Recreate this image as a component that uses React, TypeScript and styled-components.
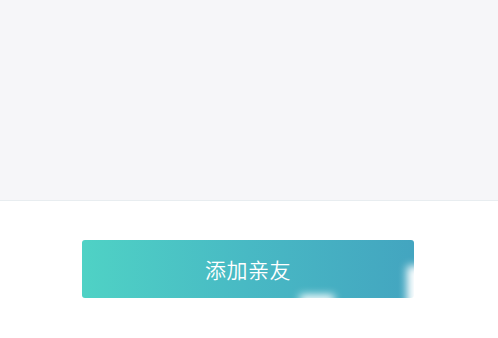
import React from 'react'
import styled, { createGlobalStyle } from 'styled-components'

const GlobalStyle = createGlobalStyle`
	html, body {
		margin: 0;
		padding: 0;
		background: #ffffff;
	}
	body {
		font-family: "Noto Sans CJK SC", "Noto Sans", sans-serif;
	}
`

const Page = styled.div`
	width: 498px;
	height: 338px;
	display: flex;
	flex-direction: column;
	background: #ffffff;
	overflow: hidden;
`

const ContentArea = styled.div`
	height: 200px;
	background: #f6f6f9;
	border-bottom: 1px solid #e8edf0;
	flex: none;
`

const Footer = styled.div`
	display: flex;
	justify-content: center;
	padding: 39px 2px 0 0;
`

const AddButton = styled.button`
	position: relative;
	width: 332px;
	height: 58px;
	border: none;
	border-radius: 3px;
	background: linear-gradient(90deg, #4fd2c5 0%, #48b9c4 50%, #43a5c0 100%);
	color: #ffffff;
	font-family: "Noto Sans CJK SC", "Noto Sans", sans-serif;
	font-size: 21px;
	font-weight: 350;
	letter-spacing: 0.5px;
	padding: 0;
	cursor: pointer;
	overflow: visible;
`

const Glare = styled.div<{ $top: number; $left: number; $w: number; $h: number }>`
	position: absolute;
	top: ${p => p.$top}px;
	left: ${p => p.$left}px;
	width: ${p => p.$w}px;
	height: ${p => p.$h}px;
	background: #ffffff;
	filter: blur(4px);
	pointer-events: none;
`

export default function App() {
	return (
		<>
			<GlobalStyle />
			<Page>
				<ContentArea />
				<Footer>
					<AddButton>
						添加亲友
						<Glare $top={26} $left={325} $w={22} $h={42} />
						<Glare $top={55} $left={218} $w={34} $h={10} />
					</AddButton>
				</Footer>
			</Page>
		</>
	)
}
